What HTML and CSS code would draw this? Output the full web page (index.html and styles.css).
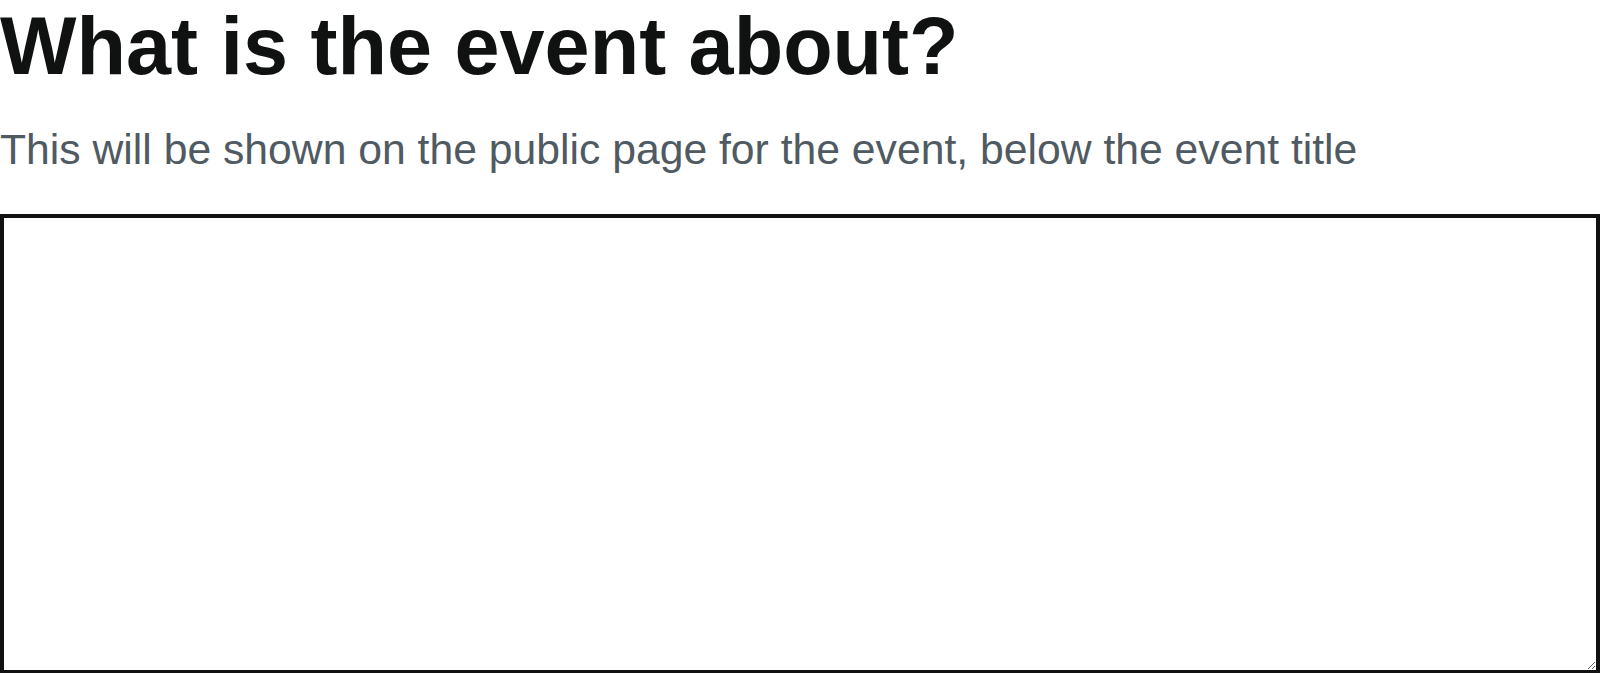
FILE: index.html
```html
<!DOCTYPE html>
<html lang="en">
<head>
<meta charset="utf-8">
<title>What is the event about?</title>
<link rel="stylesheet" href="styles.css">
</head>
<body>
<main class="form-step">
  <h1 class="step-title">What is the event about?</h1>
  <p class="step-hint">This will be shown on the public page for the event, below the event title</p>
  <textarea class="step-input" aria-label="Event description"></textarea>
</main>
</body>
</html>
```
FILE: styles.css
```css
html, body {
  margin: 0;
  padding: 0;
  background: #fff;
}
body {
  font-family: "Liberation Sans", Arial, sans-serif;
  overflow: hidden;
}
.form-step {
  display: flex;
  flex-direction: column;
  align-items: flex-start;
}
.step-title {
  margin: 0;
  font-size: 81px;
  font-weight: 700;
  line-height: normal;
  color: #101111;
}
.step-hint {
  margin: 32px 0 0;
  font-size: 42.7px;
  line-height: normal;
  color: #505a62;
}
.step-input {
  box-sizing: border-box;
  margin: 40px 0 0;
  width: 1600px;
  height: 460px;
  border: 4px solid #111;
  border-radius: 0;
  padding: 8px;
  font-family: "Liberation Sans", Arial, sans-serif;
  font-size: 24px;
  background: #fff;
  outline: none;
  resize: both;
}
```
